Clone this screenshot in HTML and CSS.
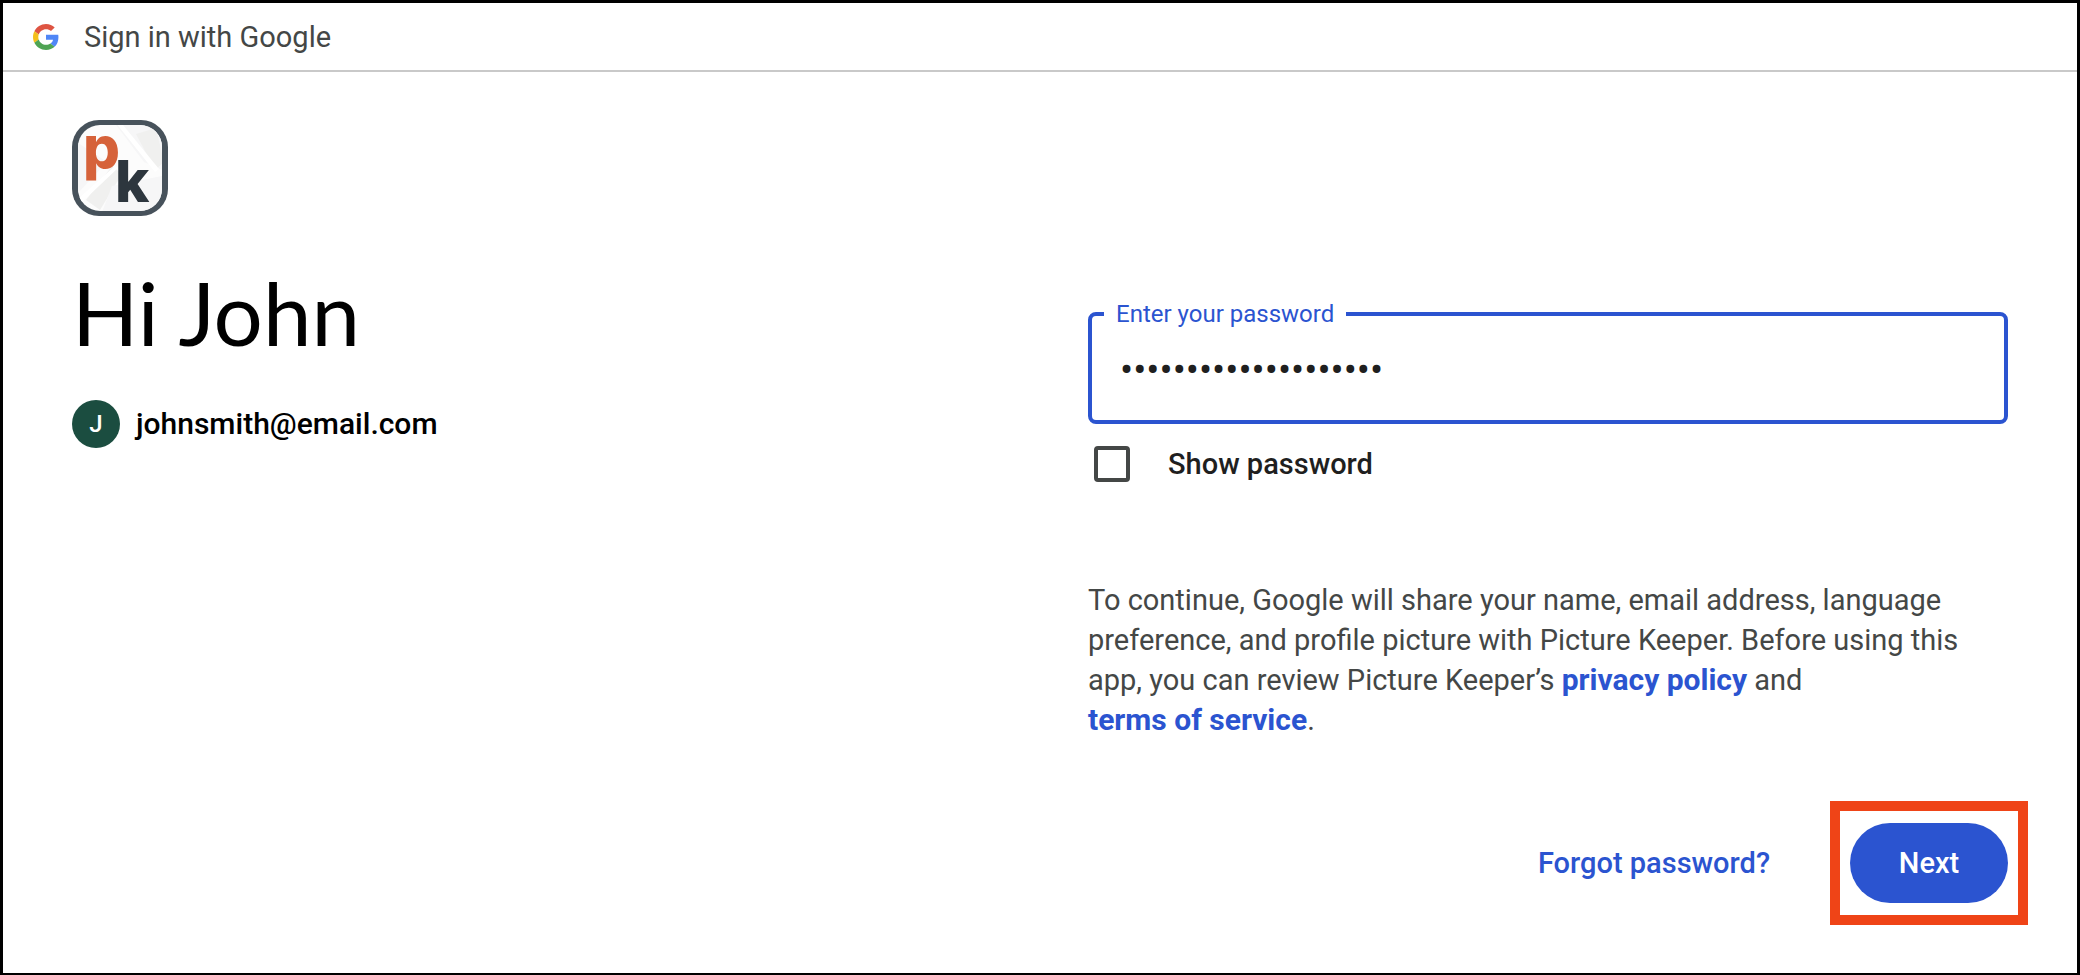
FILE: index.html
```html
<!DOCTYPE html>
<html lang="en">
  <head>
    <meta charset="UTF-8" />
    <meta name="viewport" content="width=device-width, initial-scale=1.0" />
    <title>Sign in with Google</title>
    <link rel="stylesheet" href="styles.css">
  </head>
  <body>
    <header>
      <svg class="google-logo" viewBox="0 0 48 48" aria-hidden="true">
        <path fill="#de5442" d="M24 9.5c3.54 0 6.71 1.22 9.21 3.6l6.85-6.85C35.9 2.38 30.47 0 24 0 14.62 0 6.51 5.38 2.56 13.22l7.98 6.19C12.43 13.72 17.74 9.5 24 9.5z"/>
        <path fill="#4f86f6" d="M46.98 24.55c0-1.57-.15-3.09-.38-4.55H24v9.02h12.94c-.58 2.96-2.26 5.48-4.78 7.18l7.73 6c4.51-4.18 7.09-10.36 7.09-17.65z"/>
        <path fill="#f4bf1b" d="M10.53 28.59c-.48-1.45-.76-2.99-.76-4.59s.27-3.14.76-4.59l-7.98-6.19C.92 16.46 0 20.12 0 24c0 3.88.92 7.54 2.56 10.78l7.97-6.19z"/>
        <path fill="#4fa453" d="M24 48c6.48 0 11.93-2.13 15.89-5.81l-7.73-6c-2.15 1.45-4.92 2.3-8.16 2.3-6.26 0-11.57-4.22-13.47-9.91l-7.98 6.19C6.51 42.62 14.62 48 24 48z"/>
      </svg>
      <span>Sign in with Google</span>
    </header>

    <main>
      <section class="intro">
        <svg class="app-logo" viewBox="0 0 96 96" role="img" aria-label="Picture Keeper">
          <defs>
            <clipPath id="logo-clip"><rect x="6" y="5" width="84" height="86" rx="22" /></clipPath>
          </defs>
          <rect width="96" height="96" rx="27" fill="#47525b" />
          <g clip-path="url(#logo-clip)">
            <rect x="5" y="5" width="86" height="86" fill="#fcfcfc" />
            <path d="M30 5h14l28 37 18 8V5z" fill="#f6f6f7" />
            <path d="M64 14l20-6 8 34-9 8z" fill="#f0f0ef" />
            <path d="M44 3l7 2 36 44-4 3z" fill="#fff" />
            <path d="M5 22l30 20-30 32z" fill="#f6f6f7" />
            <path d="M14 80l26-34 10 8-22 36z" fill="#f0f0ef" />
            <path d="M5 80l38-34 3 2-38 36z" fill="#fff" />
            <path d="M40 66l50-10v36H30z" fill="#f6f6f7" />
          </g>
          <text class="logo-p" x="11" y="48">p</text>
          <text class="logo-k" x="43" y="82">k</text>
        </svg>
        <h1>Hi John</h1>
        <div class="account">
          <span class="avatar">J</span>
          <span class="email">johnsmith@email.com</span>
        </div>
      </section>

      <form class="login">
        <fieldset>
          <legend><label for="password">Enter your password</label></legend>
          <input type="password" id="password" value="abcdefghijklmnopqrst" />
        </fieldset>
        <div class="show-password">
          <input type="checkbox" id="show" />
          <label for="show">Show password</label>
        </div>
        <p class="terms">
          To continue, Google will share your name, email address, language
          preference, and profile picture with Picture Keeper. Before using this
          app, you can review Picture Keeper’s <a href="#">privacy policy</a> and
          <a href="#" class="nowrap">terms of service</a>.
        </p>
        <div class="actions">
          <a href="#" class="forgot">Forgot password?</a>
          <div class="highlight">
            <button type="button">Next</button>
          </div>
        </div>
      </form>
    </main>
  </body>
</html>
```

FILE: styles.css
```css
* {
  box-sizing: border-box;
}

body {
  margin: 0;
  min-height: 100vh;
  border: 3px solid #000;
  background-color: #fff;
  color: #1f1f1f;
  font-family: Roboto, "Liberation Sans", sans-serif;
  font-size: 29px;
  line-height: 40px;
}

header {
  display: flex;
  align-items: center;
  gap: 25px;
  height: 69px;
  padding: 0 30px;
  border-bottom: 2px solid #c9c9c9;
  color: #444746;
}

.google-logo {
  width: 26px;
  height: 26px;
}

main {
  display: grid;
  grid-template-columns: 1fr 1fr;
  gap: 96px;
  padding: 48px 69px;
}

.app-logo {
  display: block;
  width: 96px;
  height: 96px;
  overflow: visible;
}

.logo-p,
.logo-k {
  font-family: Inter, sans-serif;
  font-size: 58px;
  font-weight: 800;
}

.logo-p {
  fill: #d6623a;
}

.logo-k {
  fill: #2d363e;
}

h1 {
  margin: 45px 0 35px;
  color: #000;
  font-family: Lato, sans-serif;
  font-size: 87px;
  font-weight: 400;
  line-height: 104px;
}

.account {
  display: flex;
  align-items: center;
  gap: 16px;
  color: #000;
}

.avatar {
  width: 48px;
  height: 48px;
  border-radius: 50%;
  background-color: #1b4d40;
  color: #fff;
  font-size: 24px;
  font-weight: 500;
  line-height: 48px;
  text-align: center;
}

.email {
  font-size: 30px;
  font-weight: 500;
}

.login {
  padding-top: 178px;
}

fieldset {
  height: 126px;
  margin: 0;
  padding: 0 12px;
  border: 4px solid #2b54d0;
  border-radius: 8px;
}

legend {
  padding: 0 12px;
  color: #2b54d0;
  font-size: 24px;
  line-height: 32px;
}

#password {
  display: block;
  width: 100%;
  height: 80px;
  padding: 0 16px;
  border: none;
  outline: none;
  background: none;
  color: #1f1f1f;
  font-family: Roboto, sans-serif;
  font-size: 39px;
}

.show-password {
  display: flex;
  align-items: center;
  gap: 38px;
  margin-top: 20px;
  padding-left: 6px;
  font-weight: 500;
}

.show-password input {
  appearance: none;
  width: 36px;
  height: 36px;
  margin: 0;
  border: 4px solid #444746;
  border-radius: 4px;
}

.terms {
  margin: 96px 0 61px;
  color: #444746;
}

a {
  color: #2b54d0;
  font-weight: 500;
  text-decoration: none;
}

.terms a {
  font-size: 30px;
  font-weight: 700;
}

.nowrap {
  white-space: nowrap;
}

.actions {
  display: flex;
  align-items: center;
  justify-content: flex-end;
  gap: 60px;
  margin-right: -20px;
}

.highlight {
  padding: 12px 10px;
  border: 10px solid #ef4417;
}

button {
  display: block;
  width: 158px;
  height: 80px;
  border: none;
  border-radius: 40px;
  background-color: #2b54d0;
  color: #fff;
  font-family: inherit;
  font-size: 29px;
  font-weight: 500;
}
```
